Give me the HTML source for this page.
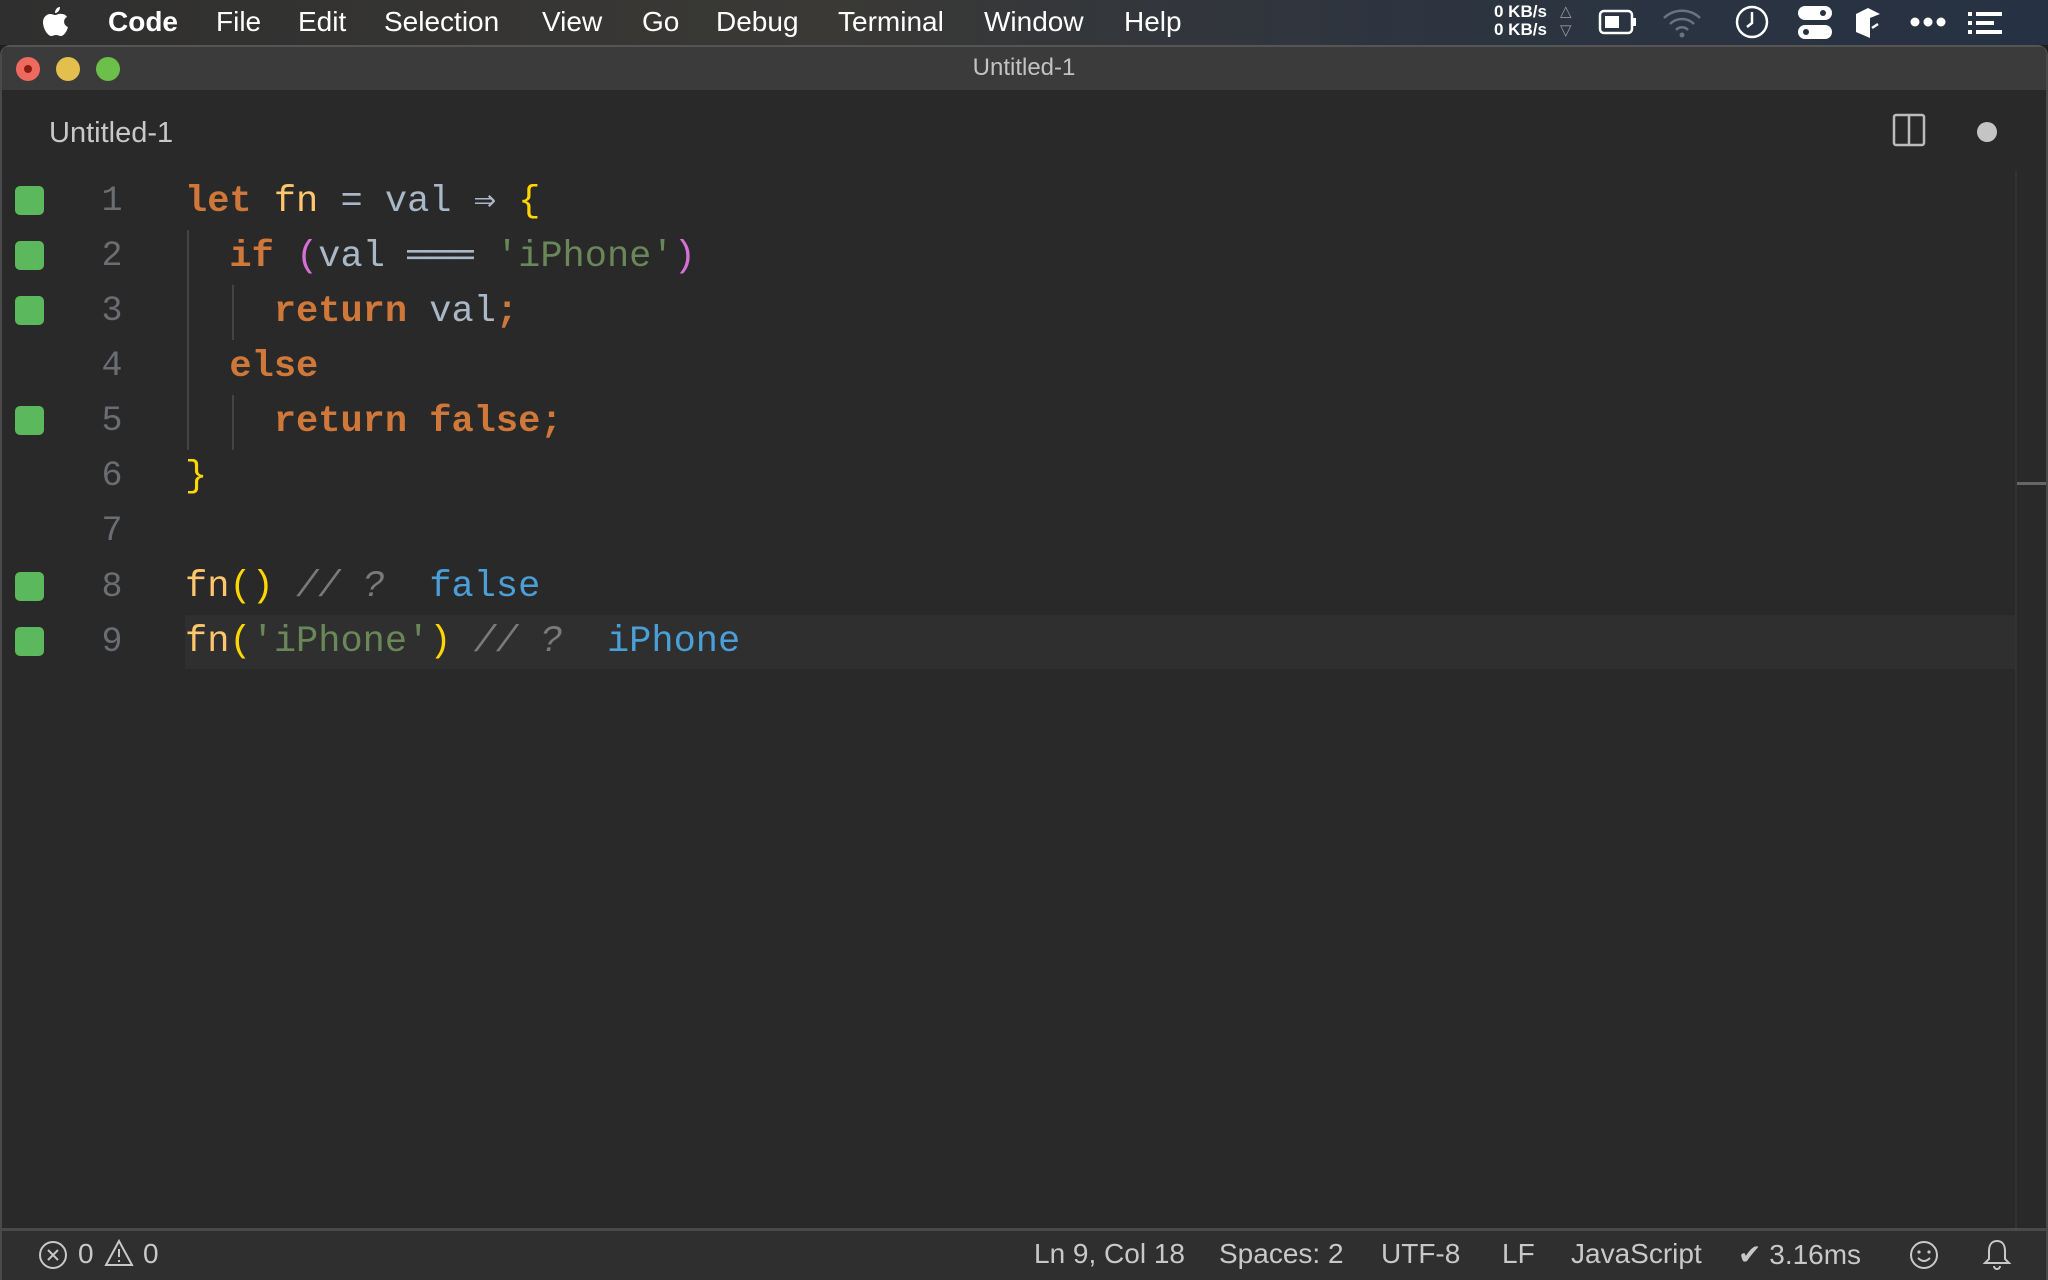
<!DOCTYPE html>
<html><head><meta charset="utf-8"><style>
*{margin:0;padding:0;box-sizing:border-box}
body{width:2048px;height:1280px;overflow:hidden;background:#1f1f1f;font-family:"Liberation Sans",sans-serif;position:relative}
.menubar{position:absolute;left:0;top:0;width:2048px;height:45px;background:linear-gradient(90deg,#2f2f2f 0%,#3a3936 40%,#2d3440 70%,#263243 100%);color:#fff;font-size:28px}
.menubar span{position:absolute;top:6px}
.win{position:absolute;left:0;top:45px;width:2048px;height:1235px;background:#292929;border-radius:10px 10px 0 0;overflow:hidden;border-left:2px solid #4a4a4a;border-right:2px solid #4a4a4a}
.title{position:absolute;left:0;top:0;width:100%;height:45px;background:#3b3b3b;border-top:2px solid #555}
.dot{position:absolute;top:10px;width:24px;height:24px;border-radius:50%}
.code{position:absolute;font-family:"Liberation Mono","DejaVu Sans Mono",monospace;font-size:37px;white-space:pre;line-height:55px}
.ln{position:absolute;left:90px;width:40px;text-align:center;color:#6a6e72;font-family:"Liberation Mono",monospace;font-size:35px}
.gs{position:absolute;left:13px;width:29px;height:29px;background:#5cb85c;border-radius:5px}
.k{color:#d0783a;font-weight:bold}.f{color:#ffc66d}.v{color:#a9b7c6}.y{color:#ffd700}.s{color:#6a8759}.p{color:#d670d6}.c{color:#7a7a7a;font-style:italic}.b{color:#4a9fd8}
.status{position:absolute;left:0;top:1183px;width:100%;height:52px;background:#2f2f2f;border-top:3px solid #4a4a4a;color:#c8c8c8;font-size:28px}
.status span{position:absolute;top:7px}
</style></head><body>
<div class="menubar">
<svg style="position:absolute;left:40px;top:5px" width="30" height="34" viewBox="0 0 30 34"><path fill="#fff" d="M20 2c0 3-2 6-5 6 0-3 2-6 5-6zM15 10c2 0 4-2 7-1 2 0 4 1 5 3-4 2-4 8 1 10-1 4-4 9-7 9-2 0-3-1-5-1s-3 1-5 1c-3 0-8-7-8-14 0-5 4-8 7-8 2 0 4 1 5 1z"/></svg>
<span style="left:108px;font-weight:bold">Code</span>
<span style="left:216px">File</span>
<span style="left:298px">Edit</span>
<span style="left:384px">Selection</span>
<span style="left:542px">View</span>
<span style="left:642px">Go</span>
<span style="left:716px">Debug</span>
<span style="left:838px">Terminal</span>
<span style="left:984px">Window</span>
<span style="left:1124px">Help</span>
<div style="position:absolute;left:1494px;top:3px;font-size:17px;line-height:18px;font-weight:bold">0 KB/s<br>0 KB/s</div>
<div style="position:absolute;left:1560px;top:2px;font-size:15px;line-height:19px;color:#999">△<br>▽</div>
<svg style="position:absolute;left:1598px;top:8px" width="40" height="28"><rect x="2" y="3" width="32" height="22" rx="4" fill="none" stroke="#fff" stroke-width="2.5"/><rect x="7" y="8" width="14" height="12" fill="#fff"/><rect x="35" y="10" width="3" height="8" fill="#fff"/></svg>
<svg style="position:absolute;left:1660px;top:6px" width="44" height="32" viewBox="0 0 44 32"><g fill="none" stroke="#6b7380" stroke-width="2.5"><path d="M4 12a26 26 0 0 1 36 0"/><path d="M10 18a17 17 0 0 1 24 0"/><path d="M16 24a8 8 0 0 1 12 0"/></g><circle cx="22" cy="29" r="2.5" fill="#6b7380"/></svg>
<svg style="position:absolute;left:1734px;top:4px" width="36" height="36"><circle cx="18" cy="18" r="15" fill="none" stroke="#fff" stroke-width="2.5"/><path d="M18 8v11l-5 4" fill="none" stroke="#fff" stroke-width="2.5"/></svg>
<svg style="position:absolute;left:1798px;top:6px" width="34" height="34"><rect x="0" y="0" width="34" height="14" rx="7" fill="#fff"/><rect x="0" y="19" width="34" height="14" rx="7" fill="#fff"/><circle cx="25" cy="7" r="3" fill="#263243"/><circle cx="8" cy="26" r="3" fill="#263243"/></svg>
<svg style="position:absolute;left:1854px;top:6px" width="30" height="34"><path d="M2 8l12-6 12 6-10 4v20L2 26z" fill="#fff"/><path d="M18 22l6-4" stroke="#fff" stroke-width="2.5"/></svg>
<svg style="position:absolute;left:1910px;top:16px" width="36" height="12"><circle cx="5" cy="6" r="4.5" fill="#fff"/><circle cx="18" cy="6" r="4.5" fill="#fff"/><circle cx="31" cy="6" r="4.5" fill="#fff"/></svg>
<svg style="position:absolute;left:1968px;top:10px" width="34" height="26"><g fill="#fff"><rect x="0" y="2" width="4" height="4"/><rect x="8" y="2" width="26" height="4"/><rect x="0" y="11" width="4" height="4"/><rect x="8" y="11" width="18" height="4"/><rect x="0" y="20" width="4" height="4"/><rect x="8" y="20" width="26" height="4"/></g></svg>
</div>
<div class="win">
<div class="title">
<div class="dot" style="left:14px;background:#ee6a5e"><div style="position:absolute;left:8px;top:8px;width:8px;height:8px;border-radius:50%;background:#8c1a10"></div></div>
<div class="dot" style="left:54px;background:#e3bf4e"></div>
<div class="dot" style="left:94px;background:#6cc04a"></div>
<div style="position:absolute;left:0;width:100%;top:7px;text-align:center;color:#c2c2c2;font-size:24px">Untitled-1</div>
</div>
<div style="position:absolute;left:47px;top:72px;color:#c8c8c8;font-size:29px">Untitled-1</div>
<svg style="position:absolute;left:1890px;top:68px" width="34" height="34"><rect x="2" y="2" width="30" height="30" rx="2" fill="none" stroke="#bbb" stroke-width="2.5"/><path d="M17 2v30" stroke="#bbb" stroke-width="2.5"/></svg>
<div style="position:absolute;left:1975px;top:77px;width:20px;height:20px;border-radius:50%;background:#c4c4c4"></div>
<div style="position:absolute;left:2013px;top:127px;width:2px;height:1060px;background:#333"></div>
<div style="position:absolute;left:2015px;top:437px;width:35px;height:3px;background:#666"></div>
<div style="position:absolute;left:183px;top:570px;width:1830px;height:54px;background:#2f2f2f"></div>
<div style="position:absolute;left:185px;top:185px;width:2px;height:220px;background:#444"></div>
<div style="position:absolute;left:230px;top:240px;width:2px;height:55px;background:#444"></div>
<div style="position:absolute;left:230px;top:350px;width:2px;height:55px;background:#444"></div>
<div class="gs" style="top:141px"></div><div class="gs" style="top:196px"></div><div class="gs" style="top:251px"></div><div class="gs" style="top:361px"></div><div class="gs" style="top:527px"></div><div class="gs" style="top:582px"></div>
<div class="ln" style="top:136px">1</div><div class="ln" style="top:191px">2</div><div class="ln" style="top:246px">3</div><div class="ln" style="top:301px">4</div><div class="ln" style="top:356px">5</div><div class="ln" style="top:411px">6</div><div class="ln" style="top:466px">7</div><div class="ln" style="top:522px">8</div><div class="ln" style="top:577px">9</div>
<div class="code" style="left:183px;top:130px"><span class="k">let</span> <span class="f">fn</span> <span class="v">= val ⇒</span> <span class="y">{</span>
  <span class="k">if</span> <span class="p">(</span><span class="v">val ═══</span> <span class="s">'iPhone'</span><span class="p">)</span>
    <span class="k">return</span> <span class="v">val</span><span class="k">;</span>
  <span class="k">else</span>
    <span class="k">return false;</span>
<span class="y">}</span>

<span class="f">fn</span><span class="y">()</span> <span class="c">// ?</span>  <span class="b">false</span>
<span class="f">fn</span><span class="y">(</span><span class="s">'iPhone'</span><span class="y">)</span> <span class="c">// ?</span>  <span class="b">iPhone</span></div>
<div class="status">
<svg style="position:absolute;left:36px;top:9px" width="30" height="30"><circle cx="15" cy="15" r="13" fill="none" stroke="#c8c8c8" stroke-width="2"/><path d="M10 10l10 10M20 10l-10 10" stroke="#c8c8c8" stroke-width="2"/></svg>
<span style="left:76px">0</span>
<svg style="position:absolute;left:102px;top:8px" width="30" height="28"><path d="M15 2L2 26h26z" fill="none" stroke="#c8c8c8" stroke-width="2"/><path d="M15 10v8M15 21v2" stroke="#c8c8c8" stroke-width="2"/></svg>
<span style="left:141px">0</span>
<span style="left:1032px">Ln 9, Col 18</span>
<span style="left:1217px">Spaces: 2</span>
<span style="left:1379px">UTF-8</span>
<span style="left:1500px">LF</span>
<span style="left:1569px">JavaScript</span>
<span style="left:1736px">✔ 3.16ms</span>
<svg style="position:absolute;left:1906px;top:8px" width="32" height="32"><circle cx="16" cy="16" r="13" fill="none" stroke="#c8c8c8" stroke-width="2"/><circle cx="11" cy="13" r="1.6" fill="#c8c8c8"/><circle cx="21" cy="13" r="1.6" fill="#c8c8c8"/><path d="M10 19q6 6 12 0" fill="none" stroke="#c8c8c8" stroke-width="2"/></svg>
<svg style="position:absolute;left:1980px;top:7px" width="30" height="34"><path d="M15 3c-6 0-8 5-8 10v8l-4 4h24l-4-4v-8c0-5-2-10-8-10zM12 28a3 3 0 0 0 6 0" fill="none" stroke="#c8c8c8" stroke-width="2"/></svg>
</div>
</div>
</body></html>
